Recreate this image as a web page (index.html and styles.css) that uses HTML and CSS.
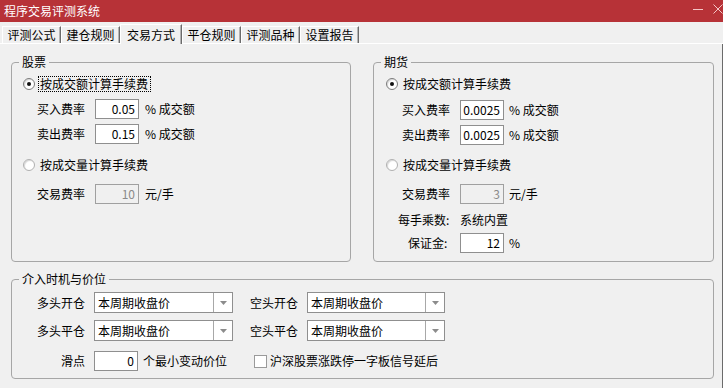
FILE: index.html
```html
<!DOCTYPE html>
<html lang="zh-CN">
<head>
<meta charset="utf-8">
<title>程序交易评测系统</title>
<link rel="stylesheet" href="styles.css">
</head>
<body>
<div class="window">
  <div class="titlebar">
    <span class="title">程序交易评测系统</span>
    <div class="controls">
      <svg class="ctl" width="10" height="10" viewBox="0 0 10 10"><line x1="0" y1="5.5" x2="10" y2="5.5" stroke="#f4c6c6" stroke-width="1"/></svg>
      <svg class="ctl" width="10" height="10" viewBox="0 0 10 10"><path d="M0.5 0.5 L9.5 9.5 M9.5 0.5 L0.5 9.5" stroke="#f4c6c6" stroke-width="1" fill="none"/></svg>
    </div>
  </div>
  <div class="tabs">
    <div class="tab">评测公式</div>
    <div class="tab">建仓规则</div>
    <div class="tab active">交易方式</div>
    <div class="tab">平仓规则</div>
    <div class="tab">评测品种</div>
    <div class="tab">设置报告</div>
  </div>
  <div class="panel">
    <div class="top-row">
      <fieldset class="group group-stock">
        <legend>股票</legend>
        <div class="radio-row mt7">
          <span class="radio checked"></span><span class="radio-label focus">按成交额计算手续费</span>
        </div>
        <div class="field-row mt7"><span class="lbl">买入费率</span><span class="input">0.05</span><span class="unit">% 成交额</span></div>
        <div class="field-row mt5"><span class="lbl">卖出费率</span><span class="input">0.15</span><span class="unit">% 成交额</span></div>
        <div class="radio-row mt13">
          <span class="radio"></span><span class="radio-label">按成交量计算手续费</span>
        </div>
        <div class="field-row mt11"><span class="lbl">交易费率</span><span class="input disabled">10</span><span class="unit">元/手</span></div>
      </fieldset>
      <fieldset class="group group-futures">
        <legend>期货</legend>
        <div class="radio-row mt7">
          <span class="radio checked"></span><span class="radio-label">按成交额计算手续费</span>
        </div>
        <div class="field-row mt8"><span class="lbl">买入费率</span><span class="input">0.0025</span><span class="unit">% 成交额</span></div>
        <div class="field-row mt5"><span class="lbl">卖出费率</span><span class="input">0.0025</span><span class="unit">% 成交额</span></div>
        <div class="radio-row mt12">
          <span class="radio"></span><span class="radio-label">按成交量计算手续费</span>
        </div>
        <div class="field-row mt11"><span class="lbl">交易费率</span><span class="input disabled">3</span><span class="unit">元/手</span></div>
        <div class="info-row mt8"><span class="info-lbl">每手乘数:</span><span>系统内置</span></div>
        <div class="field-row mt5"><span class="lbl lbl-margin">保证金:</span><span class="input">12</span><span class="unit">%</span></div>
      </fieldset>
    </div>
    <fieldset class="group group-entry">
      <legend>介入时机与价位</legend>
      <div class="entry-row mt6">
        <span class="elbl">多头开仓</span>
        <div class="combo combo-a"><span class="combo-text">本周期收盘价</span><span class="combo-btn"><svg width="7" height="4" viewBox="0 0 7 4"><polygon points="0,0 7,0 3.5,4" fill="#8c8c8c"/></svg></span></div>
        <span class="elbl2">空头开仓</span>
        <div class="combo combo-b"><span class="combo-text">本周期收盘价</span><span class="combo-btn"><svg width="7" height="4" viewBox="0 0 7 4"><polygon points="0,0 7,0 3.5,4" fill="#8c8c8c"/></svg></span></div>
      </div>
      <div class="entry-row mt7">
        <span class="elbl">多头平仓</span>
        <div class="combo combo-a"><span class="combo-text">本周期收盘价</span><span class="combo-btn"><svg width="7" height="4" viewBox="0 0 7 4"><polygon points="0,0 7,0 3.5,4" fill="#8c8c8c"/></svg></span></div>
        <span class="elbl2">空头平仓</span>
        <div class="combo combo-b"><span class="combo-text">本周期收盘价</span><span class="combo-btn"><svg width="7" height="4" viewBox="0 0 7 4"><polygon points="0,0 7,0 3.5,4" fill="#8c8c8c"/></svg></span></div>
      </div>
      <div class="entry-row slip-row mt10">
        <span class="elbl">滑点</span>
        <span class="input">0</span>
        <span class="slip-unit">个最小变动价位</span>
        <span class="check"></span>
        <span class="check-label">沪深股票涨跌停一字板信号延后</span>
      </div>
    </fieldset>
  </div>
</div>
</body>
</html>
```
FILE: styles.css
```css
* { box-sizing: border-box; }
html, body { margin: 0; padding: 0; }
body {
  width: 723px;
  height: 388px;
  overflow: hidden;
  background: #f0f0f0;
  font-family: "Noto Sans CJK SC", "Noto Sans", sans-serif;
  font-size: 12px;
  line-height: 16px;
  color: #000;
}
.window { width: 723px; height: 388px; display: flex; flex-direction: column; }

.titlebar {
  flex: none;
  height: 22px;
  background: #b73237;
  display: flex;
  align-items: center;
  padding-left: 4px;
}
.title { color: #fff; }
.controls {
  margin-left: auto;
  align-self: flex-start;
  display: flex;
  gap: 10px;
  padding-top: 4px;
}
.ctl { display: block; }

.tabs {
  flex: none;
  height: 22px;
  display: flex;
  align-items: flex-end;
  padding-left: 2px;
  border-bottom: 1px solid #fff;
}
.tab {
  width: 59px;
  height: 17px;
  text-align: center;
  border-top: 1px solid #fff;
  border-left: 1px solid #fff;
  border-right: 1px solid #6b6b6b;
  box-shadow: inset -1px 0 0 #b4b4b4;
}
.tab.active {
  width: 62px;
  height: 20px;
  margin-bottom: -1px;
  padding-top: 2px;
  background: #f0f0f0;
}

.panel {
  flex: 1;
  border-right: 1px solid #6b6b6b;
  padding: 11px 0 0 11px;
}
.top-row { display: flex; height: 207px; }

.group {
  margin: 0;
  padding: 0;
  min-width: 0;
  border: 1px solid #a6a6a6;
  border-radius: 4px;
}
.group legend {
  padding: 0 3px;
  margin-left: 7px;
  line-height: 14px;
}
.group-stock { width: 340px; }
.group-futures { width: 341px; margin-left: 22px; }
.group-entry { width: 703px; height: 107px; margin-top: 10px; }

.mt5 { margin-top: 5px; }
.mt6 { margin-top: 6px; }
.mt7 { margin-top: 7px; }
.mt8 { margin-top: 8px; }
.mt10 { margin-top: 10px; }
.mt11 { margin-top: 11px; }
.mt12 { margin-top: 12px; }
.mt13 { margin-top: 13px; }

.radio-row { display: flex; align-items: center; height: 16px; padding-left: 11px; }
.group-futures .radio-row { padding-left: 12px; }
.radio {
  flex: none;
  width: 12px;
  height: 12px;
  border-radius: 50%;
  border: 1px solid #b0b0b0;
  background: #fff;
  box-shadow: inset 1px 1px 1px #d8d8d8;
  display: flex;
  align-items: center;
  justify-content: center;
}
.radio.checked { border-color: #7c7c7c; }
.radio.checked::after {
  content: "";
  width: 4px;
  height: 4px;
  border-radius: 50%;
  background: #111;
}
.radio-label { margin-left: 4px; padding: 0 2px 0 1px; line-height: 14px; }
.radio-label.focus { outline: 1px dotted #000; }

.field-row { display: flex; align-items: center; height: 20px; }
.lbl { flex: none; margin-left: 25px; width: 58px; }
.group-futures .lbl { margin-left: 28px; }
.group-futures .lbl.lbl-margin { margin-left: 34px; width: 52px; }
.input {
  flex: none;
  width: 44px;
  height: 20px;
  border: 1px solid #8f8f8f;
  background: #fff;
  text-align: right;
  padding-right: 3px;
  line-height: 18px;
}
.input.disabled { background: #f0f0f0; color: #8a8a8a; border-color: #a0a0a0; }
.unit { margin-left: 6px; }
.group-futures .unit { margin-left: 5px; }

.info-row { display: flex; align-items: center; height: 16px; }
.info-lbl { margin-left: 24px; width: 62px; }

.entry-row { display: flex; align-items: center; height: 21px; }
.elbl { flex: none; width: 82px; text-align: right; padding-right: 9px; }
.elbl2 { flex: none; margin-left: 17px; width: 57px; }
.combo {
  flex: none;
  display: flex;
  height: 21px;
  border: 1px solid #8f8f8f;
  background: #fff;
}
.combo-a { width: 139px; }
.combo-b { width: 138px; }
.combo-text { flex: 1; padding-left: 3px; line-height: 19px; }
.combo-btn {
  width: 19px;
  border-left: 1px solid #a8a8a8;
  display: flex;
  align-items: center;
  justify-content: center;
}
.combo-btn svg { display: block; }

.slip-row { height: 20px; }
.slip-unit { flex: none; margin-left: 5px; width: 111px; }
.check {
  flex: none;
  width: 13px;
  height: 13px;
  border: 1px solid #9a9a9a;
  background: #fff;
}
.check-label { margin-left: 3px; }
```
